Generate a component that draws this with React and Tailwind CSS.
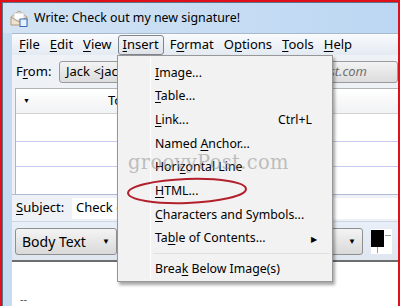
import React from "react";

const U = ({ children }) => <span className="underline underline-offset-2 decoration-1">{children}</span>;

const menuBar = [
  ["", "F", "ile"],
  ["", "E", "dit"],
  ["", "V", "iew"],
  ["", "I", "nsert"],
  ["F", "o", "rmat"],
  ["O", "p", "tions"],
  ["", "T", "ools"],
  ["", "H", "elp"],
];

const insertItems = [
  { pre: "", key: "I", post: "mage..." },
  { pre: "", key: "T", post: "able..." },
  { pre: "", key: "L", post: "ink...", shortcut: "Ctrl+L" },
  { pre: "Named ", key: "A", post: "nchor..." },
  { pre: "Hori", key: "z", post: "ontal Line" },
  { pre: "", key: "H", post: "TML..." },
  { pre: "", key: "C", post: "haracters and Symbols..." },
  { pre: "Ta", key: "b", post: "le of Contents...", sub: true },
];

const MailIcon = () => (
  <svg width="18" height="18" viewBox="0 0 18 18">
    <path d="M1 8 L9 2 L17 8 V16 H1 Z" fill="#efe3cf" stroke="#b59c7c" strokeWidth="1" />
    <rect x="4" y="4" width="10" height="7" fill="#ffffff" stroke="#c9c9c9" strokeWidth="0.8" />
    <path d="M1 8 L9 13 L17 8" fill="none" stroke="#b59c7c" strokeWidth="1" />
    <rect x="10" y="10" width="7" height="7.5" fill="#e8f1fb" stroke="#3d6fb6" strokeWidth="1" />
  </svg>
);

export default function App() {
  return (
    <div className="relative w-[400px] h-[306px] overflow-hidden border-l-2 border-t-2 border-r-2 border-[#e0101a] bg-[#c6dbf0] font-['Noto_Sans',sans-serif] text-black">
      <div className="flex flex-col h-full border-l border-t border-[#5e728a]">
        {/* title bar */}
        <div className="shrink-0 h-[30px] flex items-center pl-[7px] gap-[6px] bg-gradient-to-r from-[#d3e3f3] to-[#bcd7f3]">
          <MailIcon />
          <span className="text-[12.4px] leading-none">Write: Check out my new signature!</span>
        </div>

        <div className="flex-1 min-h-0 flex flex-col pl-[9px]">
          {/* menu bar */}
          <div className="shrink-0 h-[22px] flex items-center pl-[2px] text-[13px] border-t border-[#a9b9cc] bg-gradient-to-b from-[#f9fbfd] to-[#e4eaf2]">
            {menuBar.map(([pre, key, post], i) => (
              <span
                key={i}
                className={
                  i === 3
                    ? "px-[4px] mx-[1px] h-[20px] flex items-center rounded-[3px] border border-[#7d8590] bg-gradient-to-b from-[#f4f6f8] to-[#dfe3e8]"
                    : "px-[5px]"
                }
              >
                {pre}
                <U>{key}</U>
                {post}
              </span>
            ))}
          </div>

          <div className="flex-1 min-h-0 flex flex-col bg-[#eef1f6]">
            {/* From row */}
            <div className="shrink-0 h-[33px] flex items-center text-[13px]">
              <span className="w-[47px] pl-[4px]">
                F<U>r</U>om:
              </span>
              <div className="flex-1 h-[22px] flex items-center px-[6px] rounded-[3px] border border-[#9a9a9a] bg-gradient-to-b from-[#f3f3f3] to-[#dcdcdc]">
                <span>Jack &lt;jack@groovyp</span>
                <span className="ml-auto pr-[24px] italic text-[#707070]">ost.com</span>
              </div>
            </div>

            {/* address list */}
            <div className="shrink-0 ml-[3px] h-[106px] flex flex-col bg-white border-l border-t border-[#b4b4b4]">
              <div className="h-[25px] flex items-center border-b border-[#d2d2d2] bg-gradient-to-b from-white to-[#f1f2f4] text-[13px]">
                <span className="w-[92px] pl-[7px] text-[7px]">▼</span>
                <span>To</span>
              </div>
              <div className="h-[28px] border-b border-[#c9c9f0]" />
              <div className="h-[25px] border-b border-[#c9c9f0]" />
              <div className="flex-1" />
            </div>

            {/* subject */}
            <div className="shrink-0 h-[27px] flex items-center text-[13px] border-t border-[#aebad6]">
              <span className="w-[60px] pl-[4px]">
                <U>S</U>ubject:
              </span>
              <div className="flex-1 h-[21px] flex items-center px-[4px] bg-white">Check out my new signature!</div>
            </div>

            {/* format toolbar */}
            <div className="shrink-0 h-[41px] flex items-center gap-[8px] pl-[3px] bg-gradient-to-b from-[#e9eff8] to-[#dfe6f0] border-t border-[#cdd6e4] border-b-2 border-b-[#6d6d6d]">
              <div className="w-[102px] h-[27px] flex items-center justify-between px-[6px] rounded-[3px] border border-[#8f8f8f] bg-gradient-to-b from-[#f4f4f4] to-[#d9d9d9] text-[14px]">
                <span>Body Text</span>
                <span className="text-[8px]">▼</span>
              </div>
              <div className="w-[238px] h-[27px] flex items-center justify-end pr-[6px] rounded-[3px] border border-[#8f8f8f] bg-gradient-to-b from-[#f4f4f4] to-[#d9d9d9] text-[14px]">
                <span className="text-[8px]">▼</span>
              </div>
              <div className="relative w-[21px] h-[25px] bg-white">
                <div className="absolute left-0 top-[1px] w-[13px] h-[17px] bg-black" />
                <div className="absolute left-[14px] top-[6px] w-[6px] h-px bg-[#999]" />
                <div className="absolute left-[6px] top-[18px] w-px h-[6px] bg-[#999]" />
              </div>
            </div>

            {/* editor */}
            <div className="flex-1 min-h-0 overflow-hidden bg-white pl-[8px] pt-[31px] text-[11px] text-[#555] leading-none">--</div>
          </div>
        </div>
      </div>

      {/* Insert menu */}
      <div className="absolute left-[115px] top-[53px] w-[216px] h-[227px] flex flex-col pt-[5px] border border-[#979797] bg-[#f2f2f2] text-[12.3px] shadow-[2px_3px_3px_rgba(0,0,0,0.35)]">
        <div className="absolute left-[32px] top-[2px] bottom-[2px] w-px bg-[#e0e0e0] border-r border-white" />
        {insertItems.map((it, i) => (
          <div key={i} className="relative h-[23.7px] flex items-center pl-[37px] pr-[12px]">
            <span>
              {it.pre}
              <U>{it.key}</U>
              {it.post}
            </span>
            {it.shortcut && <span className="ml-auto mr-[8px]">{it.shortcut}</span>}
            {it.sub && <span className="ml-auto mr-[3px] text-[8px]">▶</span>}
          </div>
        ))}
        <div className="h-[7px] flex items-center pl-[35px] pr-[2px]">
          <div className="w-full h-px bg-[#e0e0e0]" />
        </div>
        <div className="relative h-[23.7px] flex items-center pl-[37px]">
          <span>
            Brea<U>k</U> Below Image(s)
          </span>
        </div>
      </div>

      {/* watermark */}
      <div className="absolute left-[126px] top-[151px] text-[19.5px] leading-none font-['DejaVu_Serif',serif] text-[#8a8a8a] opacity-50 tracking-[0.3px]">
        groovyPost.com
      </div>

      {/* red ellipse */}
      <svg className="absolute left-[123px] top-[174px]" width="124" height="30" viewBox="0 0 124 30">
        <ellipse cx="62" cy="15" rx="59" ry="12" fill="none" stroke="#b3202b" strokeWidth="2" transform="rotate(-2 62 15)" />
      </svg>
    </div>
  );
}
